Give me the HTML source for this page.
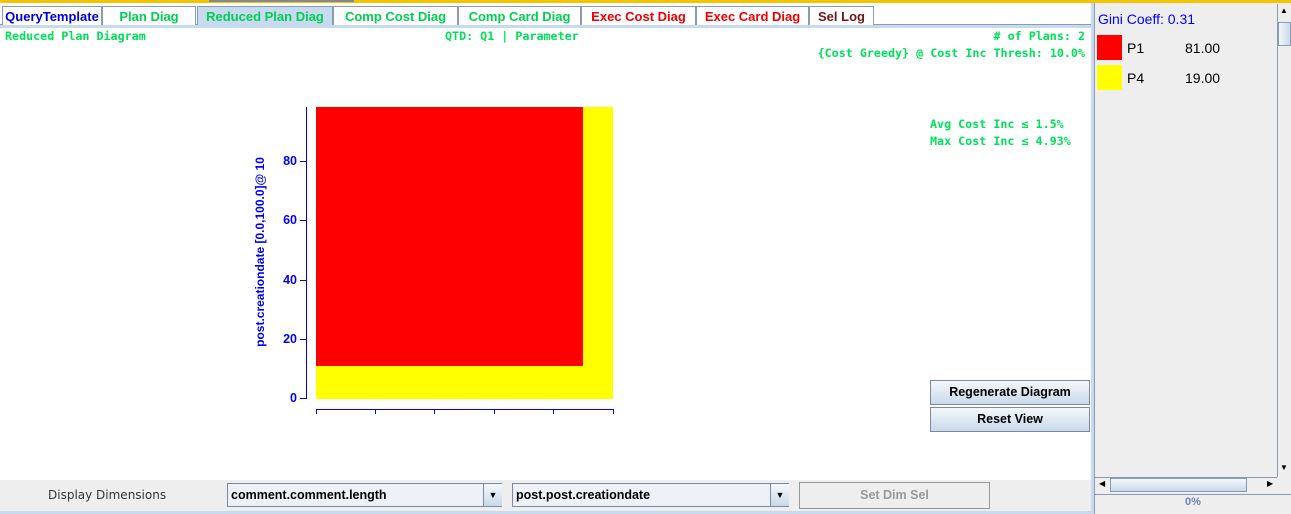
<!DOCTYPE html>
<html><head><meta charset="utf-8"><style>
body{margin:0;width:1291px;height:514px;position:relative;background:#fff;overflow:hidden;font-family:"Liberation Sans","DejaVu Sans",sans-serif}
.a{position:absolute}
.tab{position:absolute;top:6px;height:19px;border:1px solid #8a9bb5;border-bottom:none;background:#fff;font-weight:bold;font-size:13px;text-align:center;line-height:19px;box-sizing:border-box}
.mono{font-family:"DejaVu Sans Mono","Liberation Mono",monospace;font-weight:bold;font-size:11.7px;color:#00e05a}
.btn{position:absolute;border:1px solid #7a8aa0;background:linear-gradient(#f4f8fc,#c9d9ea);font-weight:bold;font-size:12.5px;text-align:center;box-sizing:border-box}
.yl{position:absolute;left:278px;width:19px;text-align:right;font-size:12.5px;font-weight:bold;color:#0000ff}
.yt{position:absolute;left:300px;width:6px;height:1px;background:#0000ff}
</style></head><body>
<div class="a" style="left:0;top:0;width:1291px;height:3px;background:#f5c400"></div>
<div class="a" style="left:209px;top:0;width:145px;height:2px;background:#888"></div>
<div class="a" style="left:0;top:24px;width:1091px;height:3px;background:#c8daf0;border-top:1px solid #8a9bb5"></div>
<div class="tab" style="left:2px;width:100px;color:#0000e0">QueryTemplate</div>
<div class="tab" style="left:102px;width:94px;color:#00d050">Plan Diag</div>
<div class="tab" style="left:197px;width:136px;color:#00d050;background:#c8daf0">Reduced Plan Diag</div>
<div class="tab" style="left:333px;width:125px;color:#00d050">Comp Cost Diag</div>
<div class="tab" style="left:458px;width:123px;color:#00d050">Comp Card Diag</div>
<div class="tab" style="left:581px;width:115px;color:#f00000">Exec Cost Diag</div>
<div class="tab" style="left:696px;width:113px;color:#f00000">Exec Card Diag</div>
<div class="tab" style="left:809px;width:65px;color:#701818">Sel Log</div>
<div class="a mono" style="left:5px;top:29px">Reduced Plan Diagram</div>
<div class="a mono" style="left:445px;top:29px">QTD: Q1 | Parameter</div>
<div class="a mono" style="right:206px;top:29px">&#35; of Plans: 2</div>
<div class="a mono" style="right:206px;top:46px">{Cost Greedy} @ Cost Inc Thresh: 10.0%</div>
<div class="a mono" style="left:930px;top:117px">Avg Cost Inc &le; 1.5%</div>
<div class="a mono" style="left:930px;top:134px">Max Cost Inc &le; 4.93%</div>
<div class="a" style="left:316px;top:107px;width:297px;height:292px;background:#ffff00"></div>
<div class="a" style="left:316px;top:107px;width:267px;height:259px;background:#ff0000"></div>
<div class="a" style="left:306px;top:107px;width:1px;height:292px;background:#0000ff"></div>
<div class="yt" style="top:398px"></div><div class="yl" style="top:391px">0</div>
<div class="yt" style="top:339px"></div><div class="yl" style="top:332px">20</div>
<div class="yt" style="top:280px"></div><div class="yl" style="top:273px">40</div>
<div class="yt" style="top:220px"></div><div class="yl" style="top:213px">60</div>
<div class="yt" style="top:161px"></div><div class="yl" style="top:154px">80</div>
<div class="a" style="left:260px;top:252px;transform:translate(-50%,-50%) rotate(-90deg);white-space:nowrap;font-size:12px;font-weight:bold;color:#0000ff">post.creationdate [0.0,100.0]@ 10</div>
<div class="a" style="left:316px;top:409px;width:298px;height:1px;background:#0000ff"></div>
<div class="a" style="left:316px;top:409px;width:1px;height:5px;background:#0000ff"></div>
<div class="a" style="left:375px;top:409px;width:1px;height:5px;background:#0000ff"></div>
<div class="a" style="left:434px;top:409px;width:1px;height:5px;background:#0000ff"></div>
<div class="a" style="left:494px;top:409px;width:1px;height:5px;background:#0000ff"></div>
<div class="a" style="left:553px;top:409px;width:1px;height:5px;background:#0000ff"></div>
<div class="a" style="left:613px;top:409px;width:1px;height:5px;background:#0000ff"></div>
<div class="btn" style="left:930px;top:380px;width:160px;height:25px;line-height:23px">Regenerate Diagram</div>
<div class="btn" style="left:930px;top:407px;width:160px;height:25px;line-height:23px">Reset View</div>
<div class="a" style="left:0;top:480px;width:1091px;height:31px;background:#eeeeee"></div>
<div class="a" style="left:0;top:511px;width:1091px;height:3px;background:#c8daf0"></div>
<div class="a" style="left:48px;top:488px;font-family:'DejaVu Sans',sans-serif;font-size:12px;color:#333">Display Dimensions</div>
<div class="a" style="left:227px;top:483px;width:275px;height:24px;border:1px solid #7a8aa0;background:#eef2f8;box-sizing:border-box;font-size:12.5px;font-weight:bold;line-height:22px;padding-left:3px">comment.comment.length</div>
<div class="a" style="left:483px;top:484px;width:18px;height:22px;background:linear-gradient(#f4f8fc,#c9d9ea);border-left:1px solid #7a8aa0;font-size:9px;text-align:center;line-height:22px">&#9660;</div>
<div class="a" style="left:512px;top:483px;width:277px;height:24px;border:1px solid #7a8aa0;background:#eef2f8;box-sizing:border-box;font-size:12.5px;font-weight:bold;line-height:22px;padding-left:3px">post.post.creationdate</div>
<div class="a" style="left:770px;top:484px;width:18px;height:22px;background:linear-gradient(#f4f8fc,#c9d9ea);border-left:1px solid #7a8aa0;font-size:9px;text-align:center;line-height:22px">&#9660;</div>
<div class="a" style="left:799px;top:482px;width:191px;height:27px;border:1px solid #999;box-sizing:border-box;font-size:12.5px;font-weight:bold;color:#999;text-align:center;line-height:25px">Set Dim Sel</div>
<div class="a" style="left:1091px;top:3px;width:3px;height:511px;background:#c8daf0"></div>
<div class="a" style="left:1094px;top:3px;width:197px;height:511px;background:#eeeeee"></div>
<div class="a" style="left:1094px;top:3px;width:1px;height:511px;background:#8a9bb5"></div>
<div class="a" style="left:1098px;top:11px;font-size:14px;color:#0000ff">Gini Coeff: 0.31</div>
<div class="a" style="left:1097px;top:35px;width:25px;height:25px;background:#ff0000"></div>
<div class="a" style="left:1127px;top:40px;font-size:14px">P1</div>
<div class="a" style="left:1185px;top:40px;font-size:14px">81.00</div>
<div class="a" style="left:1097px;top:65px;width:25px;height:25px;background:#ffff00"></div>
<div class="a" style="left:1127px;top:70px;font-size:14px">P4</div>
<div class="a" style="left:1185px;top:70px;font-size:14px">19.00</div>
<div class="a" style="left:1277px;top:4px;width:14px;height:473px;border-left:1px solid #8a9bb5;background:#eeeeee"></div>
<div class="a" style="left:1278px;top:22px;width:13px;height:24px;background:linear-gradient(90deg,#f4f8fc,#c9d9ea);border:1px solid #8a9bb5;box-sizing:border-box"></div>
<div class="a" style="left:1280px;top:6px;font-size:8px">&#9650;</div>
<div class="a" style="left:1280px;top:463px;font-size:8px">&#9660;</div>
<div class="a" style="left:1095px;top:477px;width:182px;height:15px;border-top:1px solid #8a9bb5;background:#eeeeee"></div>
<div class="a" style="left:1110px;top:478px;width:137px;height:14px;background:linear-gradient(#f4f8fc,#c9d9ea);border:1px solid #8a9bb5;box-sizing:border-box"></div>
<div class="a" style="left:1099px;top:479px;font-size:8px">&#9664;</div>
<div class="a" style="left:1267px;top:479px;font-size:8px">&#9654;</div>
<div class="a" style="left:1095px;top:494px;width:196px;height:1px;background:#8a9bb5"></div>
<div class="a" style="left:1095px;top:496px;width:196px;text-align:center;font-size:11px;font-weight:bold;color:#6a80c0">0%</div>
</body></html>
